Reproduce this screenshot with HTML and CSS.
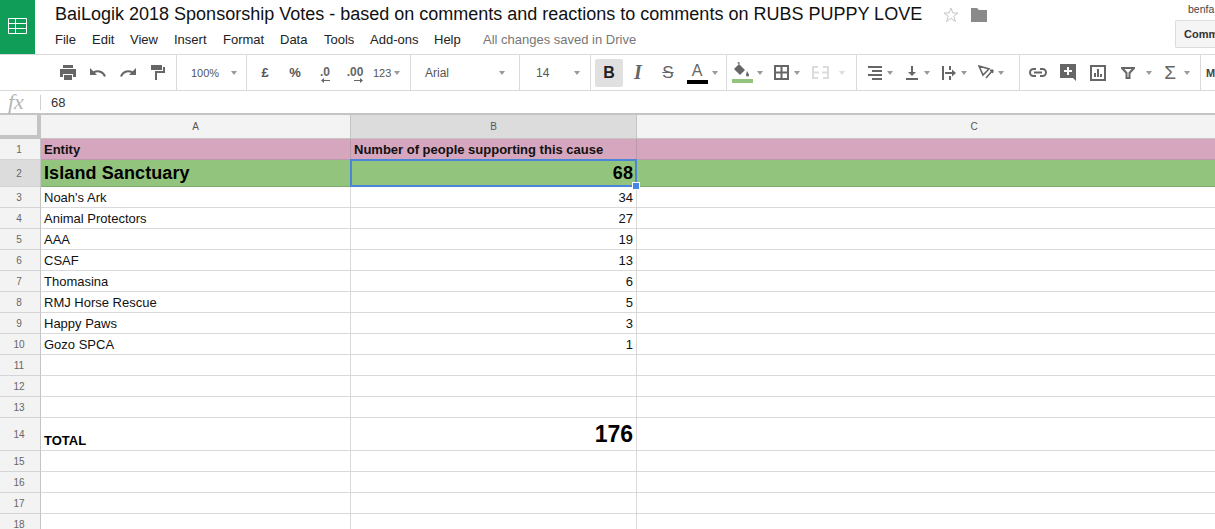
FILE: index.html
```html
<!DOCTYPE html>
<html lang="en">
<head>
<meta charset="utf-8">
<title>BaiLogik 2018 Sponsorship Votes</title>
<link rel="stylesheet" href="styles.css">
</head>
<body>
<header class="top">
  <div class="logo">
    <svg width="19" height="16" viewBox="0 0 19 16" fill="none" stroke="#fff" stroke-width="1"><path d="M.5.5h18v15H.5zM.5 5.500h18M.5 10.500h18M7.500.5v15"/></svg>
  </div>
  <div class="titles">
    <div class="title-row">
      <span class="doc-title">BaiLogik 2018 Sponsorship Votes - based on comments and reactions to comments on RUBS PUPPY LOVE</span>
      <svg class="star" width="16" height="16" viewBox="0 0 16 16" fill="none" stroke="#c6c6c6"><path d="M8 1l1.800 5h5.200l-4.200 3.200 1.600 5.300L8 11.300l-4.400 3.200 1.600-5.300L1 6h5.200z"/></svg>
      <svg class="folder" width="16" height="14" viewBox="0 0 16 14" fill="#8a8a8a"><path d="M0 0h6l2 2h8v12H0z"/></svg>
    </div>
    <nav class="menu">
      <span class="m-file">File</span><span class="m-edit">Edit</span><span class="m-view">View</span><span class="m-insert">Insert</span><span class="m-format">Format</span><span class="m-data">Data</span><span class="m-tools">Tools</span><span class="m-addons">Add-ons</span><span class="m-help">Help</span><span class="saved">All changes saved in Drive</span>
    </nav>
  </div>
  <div class="account">
    <div class="user">benfa</div>
    <button class="comments">Comm</button>
  </div>
</header>

<div class="toolbar">
  <div class="group g1">
    <span class="btn"><svg width="16" height="15" viewBox="0 0 16 15" fill="#666"><path d="M3 0h10v3H3zM0 4h16v8h-3V9H3v3H0zM4 10h8v5H4z"/></svg></span>
    <span class="btn"><svg width="16" height="9" viewBox="0 0 16 9" fill="none" stroke="#666" stroke-width="2"><path d="M15 8.500C13 3.500 7 1.500 2.500 5"/><path d="M0 0v7h7" fill="#666" stroke="none"/></svg></span>
    <span class="btn"><svg width="16" height="9" viewBox="0 0 16 9" fill="none" stroke="#666" stroke-width="2"><path d="M1 8.500C3 3.500 9 1.500 13.500 5"/><path d="M16 0v7H9" fill="#666" stroke="none"/></svg></span>
    <span class="btn"><svg width="14" height="15" viewBox="0 0 14 15" fill="#666"><path d="M0 0h11v5H0zM12 2h2v6H6v7H4V6h8z"/></svg></span>
  </div>
  <div class="group g2"><span class="tx zoom-val">100%</span><i class="arrow"></i></div>
  <div class="group g3">
    <span class="btn tx big">£</span>
    <span class="btn tx big">%</span>
    <span class="btn"><span class="dec">.0<svg width="9" height="5" viewBox="0 0 9 5" fill="#666"><path d="M0 2.500L3 0v2h6v1H3v2z"/></svg></span></span>
    <span class="btn"><span class="dec">.00<svg width="9" height="5" viewBox="0 0 9 5" fill="#666"><path d="M9 2.500L6 0v2H0v1h6v2z"/></svg></span></span>
    <span class="tx num-fmt">123</span><i class="arrow a-num"></i>
  </div>
  <div class="group g4"><span class="tx font-name">Arial</span><i class="arrow"></i></div>
  <div class="group g5"><span class="tx font-size">14</span><i class="arrow"></i></div>
  <div class="group g6">
    <span class="btn bold-btn">B</span>
    <span class="btn italic-btn">I</span>
    <span class="btn strike-btn">S</span>
    <span class="color-a">A<b class="bar-black"></b></span><i class="arrow a-near"></i>
  </div>
  <div class="group g7">
    <span class="fill"><svg width="16" height="15" viewBox="0 0 16 15" fill="#666"><path d="M5 0l1 1-1 1 6 6-5 5-6-6 5-5L3 1zM13 9c1 2 2 3 2 4a1.500 1.500 0 01-3 0c0-1 .5-2 1-4z"/></svg><b class="bar-green"></b></span><i class="arrow a-near"></i>
    <span class="btn b-border"><svg width="15" height="15" viewBox="0 0 15 15" fill="none" stroke="#666" stroke-width="2"><path d="M1 1h13v13H1zM7.500 1v13M1 7.500h13"/></svg></span><i class="arrow a-border"></i>
    <span class="btn b-merge"><svg width="17" height="13" viewBox="0 0 17 13" fill="none" stroke="#dcdcdc" stroke-width="2"><path d="M6 1H1v11h5M11 1h5v11h-5M2 6.500h5M10 6.500h5"/></svg></span><i class="arrow a-merge off"></i>
  </div>
  <div class="group g8">
    <span class="btn narrow"><svg width="14" height="14" viewBox="0 0 14 14" fill="#666"><path d="M0 0h14v2H0zM4 4h10v2H4zM0 8h14v2H0zM4 12h10v2H4z"/></svg></span><i class="arrow a-tight"></i>
    <span class="btn narrow"><svg width="12" height="14" viewBox="0 0 12 14" fill="#666"><path d="M0 12h12v2H0zM5 0h2v6h3L6 10 2 6h3z"/></svg></span><i class="arrow a-tight"></i>
    <span class="btn narrow"><svg width="14" height="14" viewBox="0 0 14 14" fill="#666"><path d="M0 0h2v14H0zM7 0h2v4H7zM7 10h2v4H7zM3 6h7V3.500L14 7l-4 3.500V8H3z"/></svg></span><i class="arrow a-tight"></i>
    <span class="btn narrow"><svg width="16" height="15" viewBox="0 0 16 15" fill="none" stroke="#666" stroke-width="1.600"><path d="M1 1l10 3-6 6zM8 13L15 5M15 5l-3 .5M15 5l-.5 3"/></svg></span><i class="arrow a-tight"></i>
  </div>
  <div class="group g9">
    <span class="btn"><svg width="18" height="9" viewBox="0 0 18 9" fill="none" stroke="#666" stroke-width="2"><path d="M7 1H4.500a3.500 3.500 0 000 7H7M11 1h2.500a3.500 3.500 0 010 7H11M5 4.500h8"/></svg></span>
    <span class="btn"><svg width="16" height="17" viewBox="0 0 16 17" fill="#666"><path fill-rule="evenodd" d="M0 0h16v17l-3-3H0zM7 3v3H4v2h3v3h2V8h3V6H9V3z"/></svg></span>
    <span class="btn"><svg width="16" height="16" viewBox="0 0 16 16" fill="#666"><path fill-rule="evenodd" d="M0 0h16v16H0zM2 2v12h12V2zM4 8h2v4H4zM7 4h2v8H7zM10 9h2v3h-2z"/></svg></span>
    <span class="btn"><svg width="14" height="12" viewBox="0 0 14 12" fill="none" stroke="#666" stroke-width="2"><path d="M1 1h12L8.500 6v5h-3V6z"/></svg></span><i class="arrow a-filter"></i>
    <span class="btn sigma">Σ</span><i class="arrow a-sigma"></i>
  </div>
  <div class="group g10"><span class="tx more">M</span></div>
</div>

<div class="formula">
  <span class="fx">fx</span>
  <span class="fx-sep"></span>
  <span class="fx-val">68</span>
</div>

<main class="sheet">
  <div class="corner"></div>
  <div class="col-head">A</div>
  <div class="col-head sel">B</div>
  <div class="col-head last">C</div>

  <div class="row-head">1</div><div class="cell pink bold">Entity</div><div class="cell pink bold">Number of people supporting this cause</div><div class="cell pink end"></div>
  <div class="row-head sel">2</div><div class="cell green hero">Island Sanctuary</div><div class="cell green hero right active">68<i class="handle"></i></div><div class="cell green end"></div>
  <div class="row-head">3</div><div class="cell">Noah's Ark</div><div class="cell right">34</div><div class="cell end"></div>
  <div class="row-head">4</div><div class="cell">Animal Protectors</div><div class="cell right">27</div><div class="cell end"></div>
  <div class="row-head">5</div><div class="cell">AAA</div><div class="cell right">19</div><div class="cell end"></div>
  <div class="row-head">6</div><div class="cell">CSAF</div><div class="cell right">13</div><div class="cell end"></div>
  <div class="row-head">7</div><div class="cell">Thomasina</div><div class="cell right">6</div><div class="cell end"></div>
  <div class="row-head">8</div><div class="cell">RMJ Horse Rescue</div><div class="cell right">5</div><div class="cell end"></div>
  <div class="row-head">9</div><div class="cell">Happy Paws</div><div class="cell right">3</div><div class="cell end"></div>
  <div class="row-head">10</div><div class="cell">Gozo SPCA</div><div class="cell right">1</div><div class="cell end"></div>
  <div class="row-head">11</div><div class="cell"></div><div class="cell"></div><div class="cell end"></div>
  <div class="row-head">12</div><div class="cell"></div><div class="cell"></div><div class="cell end"></div>
  <div class="row-head">13</div><div class="cell"></div><div class="cell"></div><div class="cell end"></div>
  <div class="row-head">14</div><div class="cell bold total-label">TOTAL</div><div class="cell right total">176</div><div class="cell end"></div>
  <div class="row-head">15</div><div class="cell"></div><div class="cell"></div><div class="cell end"></div>
  <div class="row-head">16</div><div class="cell"></div><div class="cell"></div><div class="cell end"></div>
  <div class="row-head">17</div><div class="cell"></div><div class="cell"></div><div class="cell end"></div>
  <div class="row-head">18</div><div class="cell"></div><div class="cell"></div><div class="cell end"></div>
</main>
</body>
</html>
```
FILE: styles.css
```css
* { box-sizing: border-box; }
html, body { margin: 0; height: 529px; overflow: hidden; background: #fff; }
body { font-family: "Liberation Sans", Arial, sans-serif; color: #000; }

.top { display: flex; height: 54px; }
.logo { width: 35px; height: 54px; background: #0f9d58; display: flex; align-items: center; justify-content: center; padding-bottom: 2px; flex: none; }
.titles { width: 1140px; flex: none; padding-left: 20px; }
.title-row { display: flex; align-items: center; height: 28px; padding-top: 1px; }
.doc-title { font-size: 18px; color: #111; white-space: nowrap; }
.star { margin-left: 21px; }
.folder { margin-left: 12px; }
.menu { display: flex; font-size: 13px; color: #222; height: 21px; align-items: center; padding-top: 2px; }
.menu span { flex: none; }
.m-file { width: 37px; } .m-edit { width: 38px; } .m-view { width: 44px; } .m-insert { width: 49px; }
.m-format { width: 57px; } .m-data { width: 44px; } .m-tools { width: 46px; } .m-addons { width: 64px; } .m-help { width: 49px; }
.saved { color: #777; }
.account { flex: none; width: 40px; }
.user { font-size: 10.5px; color: #444; padding: 3px 0 0 13px; height: 20px; white-space: nowrap; }
.comments { display: block; width: 40px; height: 28px; padding: 0 0 0 8px; text-align: left; white-space: nowrap; font: bold 11px "Liberation Sans", Arial, sans-serif; color: #333; background: #f5f5f5; border: 1px solid #dcdcdc; border-right: 0; border-radius: 2px 0 0 2px; }

.toolbar { display: flex; height: 37px; border-top: 1px solid #dadada; border-bottom: 1px solid #dadada; overflow: hidden; }
.group { display: flex; align-items: center; flex: none; height: 100%; border-right: 1px solid #dadada; }
.g1 { width: 177px; padding-left: 53px; }
.g2 { width: 70px; padding-left: 14px; }
.g3 { width: 164px; padding-left: 3px; }
.g4 { width: 109px; padding-left: 14px; }
.g5 { width: 71px; padding-left: 16px; }
.g6 { width: 136px; padding-left: 4px; }
.g7 { width: 130px; padding-left: 3px; }
.g8 { width: 163px; padding-left: 6px; }
.g9 { width: 181px; padding-left: 3px; }
.g10 { width: 15px; border-right: 0; padding-left: 5px; }
.btn { width: 30px; height: 28px; display: flex; align-items: center; justify-content: center; flex: none; color: #666; }
.btn.narrow { width: 24px; }
.tx { font-size: 11px; color: #555; white-space: nowrap; }
.big { font-size: 13px; font-weight: bold; }
.arrow { display: block; flex: none; width: 0; height: 0; border-left: 3.5px solid transparent; border-right: 3.5px solid transparent; border-top: 4px solid #999; }
.arrow.off { border-top-color: #ddd; }
.zoom-val { width: 28px; margin-right: 12px; }
.dec { display: flex; flex-direction: column; align-items: flex-end; font-size: 12px; font-weight: bold; color: #666; line-height: 12px; margin-top: 3px; }
.num-fmt { width: 20px; margin-left: 3px; }
.a-num { margin-left: 1px; }
.a-near { margin-left: 3px; }
.font-name { width: 74px; font-size: 12px; }
.font-size { width: 38px; font-size: 12px; }
.bold-btn { width: 28px; background: #e0e0e0; border-radius: 2px; font-size: 16px; font-weight: bold; color: #222; }
.italic-btn { font: italic bold 20px "Liberation Serif", serif; color: #666; }
.strike-btn { text-decoration: line-through; font-size: 17px; }
.color-a { display: flex; flex-direction: column; align-items: center; width: 24px; margin-left: 2px; font-size: 16px; line-height: 18px; color: #666; }
.bar-black { display: block; width: 21px; height: 4px; background: #000; }
.fill { display: flex; flex-direction: column; align-items: center; width: 24px; }
.bar-green { display: block; width: 21px; height: 4px; background: #93c47d; margin-top: 2px; }
.btn.b-border { width: 24px; margin-left: 6px; }
.a-border { margin-left: 1px; margin-right: 8px; }
.btn.b-merge { width: 24px; }
.a-merge { margin-left: 7px; }
.a-tight { margin-right: 7px; }
.btn.sigma { font-size: 19px; width: 24px; color: #666; }
.a-filter { margin-left: 3px; margin-right: 6px; }
.a-sigma { margin-left: 2px; }
.more { font-weight: bold; color: #444; }

.formula { display: flex; align-items: center; height: 24px; border-bottom: 2px solid #c4c4c4; }
.fx { width: 40px; padding-left: 8px; font: italic 22px "Liberation Serif", serif; color: #b5b5b5; }
.fx-sep { width: 1px; height: 15px; background: #d0d0d0; }
.fx-val { margin-left: 10px; font-size: 13px; color: #333; }

.sheet { display: grid; grid-template-columns: 41px 310px 286px 1fr; grid-template-rows: 24px 21px 27px repeat(11, 21px) 33px repeat(4, 21px); }
.corner { background: #f3f3f3; border-right: 4px solid #c4c4c4; border-bottom: 4px solid #c4c4c4; }
.col-head { background: #f3f3f3; border-right: 1px solid #c4c4c4; border-bottom: 1px solid #c4c4c4; font-size: 10px; color: #555; display: flex; align-items: center; justify-content: center; }
.col-head.sel, .row-head.sel { background: #dcdcdc; }
.col-head.last { border-right: 0; padding-left: 96px; }
.row-head { background: #f3f3f3; border-right: 1px solid #c4c4c4; border-bottom: 1px solid #d4d4d4; font-size: 10px; color: #666; display: flex; align-items: center; justify-content: center; padding-right: 2px; }
.cell { position: relative; border-right: 1px solid #d9d9d9; border-bottom: 1px solid #d9d9d9; font-size: 13px; color: #111; padding: 1px 3px 0; display: flex; align-items: center; white-space: nowrap; }
.end { border-right: 0; }
.right { justify-content: flex-end; }
.bold { font-weight: bold; }
.pink { background: #d5a6bd; border-color: #b89aa8; }
.green { background: #93c47d; border-color: #7fa86d; }
.hero { font-size: 18px; font-weight: bold; letter-spacing: .1px; color: #000; }
.active::after { content: ""; position: absolute; top: -1px; left: -1px; right: -1px; bottom: -1px; border: 2px solid #4a86d8; }
.handle { position: absolute; z-index: 1; right: -4px; bottom: -4px; width: 8px; height: 8px; background: #4a86e8; border: 1px solid #fff; }
.total-label { align-items: flex-end; padding-bottom: 2px; color: #000; }
.total { font-size: 23px; font-weight: bold; align-items: flex-start; padding-top: 3px; color: #000; }
```
